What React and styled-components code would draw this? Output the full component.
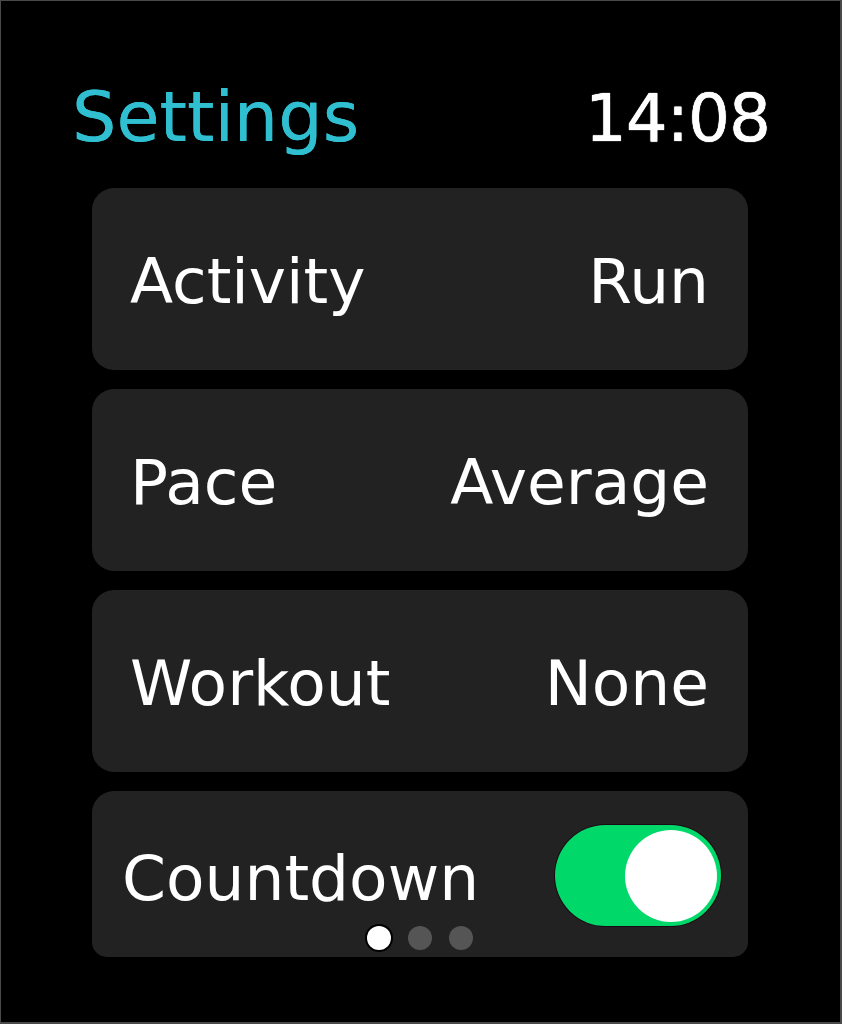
import React from 'react'
import styled, { createGlobalStyle } from 'styled-components'

const GlobalStyle = createGlobalStyle`
  html, body {
    margin: 0;
    padding: 0;
    background: #000;
  }
  * {
    box-sizing: border-box;
  }
`

const rows = [
  { label: 'Activity', value: 'Run' },
  { label: 'Pace', value: 'Average' },
  { label: 'Workout', value: 'None' },
]

const App = () => {
  return (
    <>
      <GlobalStyle />
      <Screen>
        <Header>
          <Title>Settings</Title>
          <Clock>14:08</Clock>
        </Header>
        <List>
          {rows.map((row) => (
            <Card key={row.label}>
              <Label>{row.label}</Label>
              <Value>{row.value}</Value>
            </Card>
          ))}
          <Card $last>
            <Label $tight>Countdown</Label>
            <Toggle aria-checked="true" role="switch">
              <Knob />
            </Toggle>
            <Dots>
              <Dot $active />
              <Dot />
              <Dot />
            </Dots>
          </Card>
        </List>
      </Screen>
    </>
  )
}

const Screen = styled.div`
  width: 842px;
  height: 1024px;
  background: #000;
  border-style: solid;
  border-color: #4a4a4a;
  border-width: 1px 2px 2px 1px;
  overflow: hidden;
  font-family: "DejaVu Sans", "Liberation Sans", sans-serif;
`

const Header = styled.div`
  display: flex;
  justify-content: space-between;
  align-items: baseline;
  padding: 81px 70px 0 71px;
  height: 187px;
`

const Title = styled.h1`
  margin: 0;
  font-size: 70px;
  font-weight: 400;
  line-height: 1;
  color: #2fbfd0;
  text-shadow: 0 0 0.6px #2fbfd0;
`

const Clock = styled.div`
  font-size: 66px;
  line-height: 1;
  color: #fff;
  letter-spacing: -1px;
  text-shadow: 0 0 0.8px #fff, 0 0 0.8px #fff;
`

const List = styled.div`
  display: flex;
  flex-direction: column;
  gap: 19px;
  padding: 0 92px 0 91px;
`

const Card = styled.div`
  position: relative;
  display: flex;
  justify-content: space-between;
  align-items: center;
  height: ${(p) => (p.$last ? '166px' : '182px')};
  padding: ${(p) => (p.$last ? '0 27px 0 30px' : '0 39px 0 38px')};
  background: #222;
  border-radius: ${(p) => (p.$last ? '22px 22px 15px 15px' : '22px')};
`

const Label = styled.span`
  font-size: 63px;
  line-height: 1;
  color: #fff;
  margin-top: ${(p) => (p.$tight ? '8px' : '4px')};
`

const Value = styled(Label)``

const Toggle = styled.div`
  display: flex;
  justify-content: flex-end;
  align-items: center;
  width: 166px;
  height: 101px;
  padding: 4px;
  border-radius: 51px;
  background: #00d96a;
  box-shadow: 0 0 0 1px #1a0a14;
  margin-top: 3px;
`

const Knob = styled.div`
  width: 92px;
  height: 92px;
  border-radius: 50%;
  background: #fff;
`

const Dots = styled.div`
  position: absolute;
  left: 0;
  right: 0;
  bottom: 7px;
  display: flex;
  justify-content: center;
  gap: 17px;
`

const Dot = styled.div`
  width: 24px;
  height: 24px;
  border-radius: 50%;
  background: ${(p) => (p.$active ? '#fff' : '#555')};
  box-shadow: ${(p) => (p.$active ? '0 0 0 2px #000' : 'none')};
`

export default App
